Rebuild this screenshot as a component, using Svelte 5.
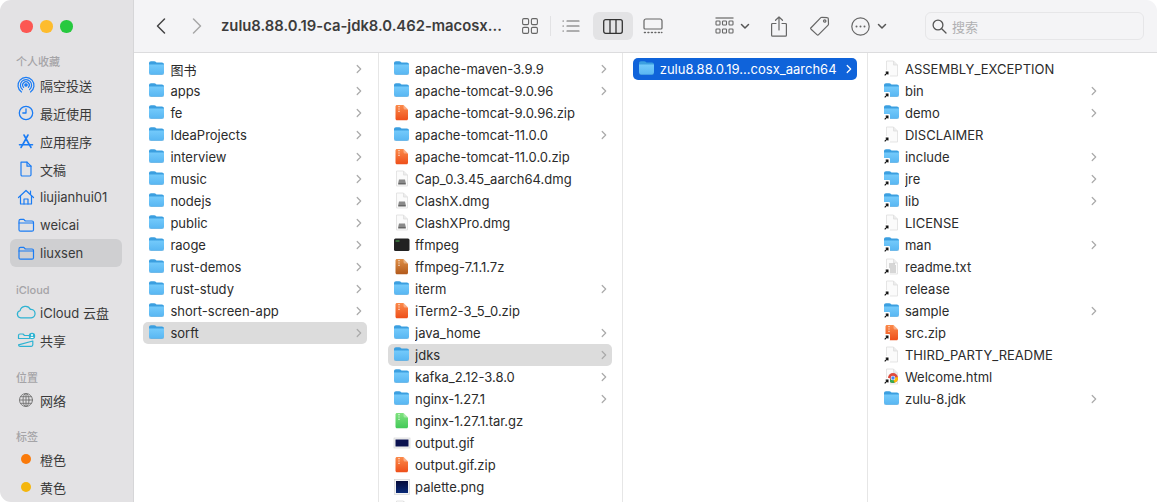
<script>
  const side = [
    { h: '个人收藏', cls: 'first', items: [['隔空投送','airdrop'],['最近使用','clock'],['应用程序','apps'],['文稿','doc'],['liujianhui01','home'],['weicai','folder'],['liuxsen','folder',true]] },
    { h: 'iCloud', cls: 'sec-a', items: [['iCloud 云盘','cloud'],['共享','shared']] },
    { h: '位置', cls: 'sec-b', items: [['网络','globe']] },
    { h: '标签', cls: 'sec-c', items: [['橙色','orange'],['黄色','yellow']] }
  ];
  const f = 'folder', z = 'zip';
  const col1 = [['图书',f],['apps',f],['fe',f],['IdeaProjects',f],['interview',f],['music',f],['nodejs',f],['public',f],['raoge',f],['rust-demos',f],['rust-study',f],['short-screen-app',f],['sorft',f,'grey']];
  const col2 = [['apache-maven-3.9.9',f],['apache-tomcat-9.0.96',f],['apache-tomcat-9.0.96.zip',z],['apache-tomcat-11.0.0',f],['apache-tomcat-11.0.0.zip',z],['Cap_0.3.45_aarch64.dmg','dmg'],['ClashX.dmg','dmg'],['ClashXPro.dmg','dmg'],['ffmpeg','term'],['ffmpeg-7.1.1.7z','7z'],['iterm',f],['iTerm2-3_5_0.zip',z],['java_home',f],['jdks',f,'grey'],['kafka_2.12-3.8.0',f],['nginx-1.27.1',f],['nginx-1.27.1.tar.gz','gz'],['output.gif','gif'],['output.gif.zip',z],['palette.png','png'],['','dmg']];
  const col3 = [['zulu8.88.0.19...cosx_aarch64',f,'blue']];
  const col4 = [['ASSEMBLY_EXCEPTION','adoc'],['bin','afolder'],['demo','afolder'],['DISCLAIMER','adoc'],['include','afolder'],['jre','afolder'],['lib','afolder'],['LICENSE','adoc'],['man','afolder'],['readme.txt','atxt'],['release','adoc'],['sample','afolder'],['src.zip','azip'],['THIRD_PARTY_README','adoc'],['Welcome.html','ahtml'],['zulu-8.jdk','f8']];
  const cols = [col1, col2, col3, col4];
  const hasChevron = (k) => k === 'folder' || k === 'afolder' || k === 'f8';
</script>

{#snippet folderShape()}
  <path d="M1 3.2C1 2 1.8 1.2 3 1.2h3.2c.7 0 1.100.2 1.500.6l.8.8h5.400c1.200 0 2.100.9 2.100 2.100v1H1z" fill="#3b9fe0"/>
  <path d="M1 4.600h15v8c0 1.200-.9 2.100-2.100 2.100H3.100C1.900 14.700 1 13.800 1 12.600z" fill="url(#fg)"/>
  <path d="M1 12.600c0 1.200.9 2.100 2.100 2.100h10.800c1.200 0 2.100-.9 2.100-2.100v.5c0 1.200-.9 2-2.100 2H3.100c-1.200 0-2.100-.8-2.100-2z" fill="#3c8fc8"/>
{/snippet}
{#snippet alias()}
  <rect x="0" y="10" width="7" height="7" rx="1" fill="#fff"/>
  <path d="M1.700 15.300l3-3M2.700 12.200h2.200v2.200" stroke="#111" stroke-width="1.200" fill="none"/>
{/snippet}
{#snippet blank()}
  <path d="M3.500 1h7l4 4v11h-11z" fill="#fbfbfb" stroke="#dedede" stroke-width=".8"/>
  <path d="M10.500 1v4h4" fill="#ececec" stroke="#dedede" stroke-width=".8"/>
{/snippet}
{#snippet zipShape(id)}
  <path d="M4 1h6.500l4.500 4.500v9.200c0 .9-.6 1.500-1.500 1.500h-9.500c-.9 0-1.500-.6-1.500-1.500V2.500C2.500 1.600 3.100 1 4 1z" fill="url(#{id})"/>
  <path d="M10.500 1v3c0 .9.600 1.500 1.500 1.500h3z" fill="#fff" opacity=".35"/>
  <path d="M6 2v6" stroke="#fff" stroke-width="1.200" stroke-dasharray="1.200 1.200" opacity=".85"/>
{/snippet}

{#snippet fileIcon(k)}
  <svg class="ficon" width="18" height="18" viewBox="0 0 18 18" aria-hidden="true">
    {#if k === 'folder'}
      {@render folderShape()}
    {:else if k === 'afolder' || k === 'f8'}
      {@render folderShape()}
      {#if k === 'afolder'}{@render alias()}{/if}
    {:else if k === 'zip'}
      {@render zipShape('zg')}
    {:else if k === '7z'}
      {@render zipShape('sg')}
    {:else if k === 'gz'}
      {@render zipShape('gg')}
    {:else if k === 'azip'}
      {@render zipShape('zg')}{@render alias()}
    {:else if k === 'dmg'}
      {@render blank()}
      <path d="M6 9.500h6l.8 3.500H5.200z" fill="#8a8a8a"/><rect x="5.200" y="13" width="7.600" height="1.500" fill="#666"/>
    {:else if k === 'term'}
      <rect x="1" y="2.500" width="15.500" height="12.500" rx="1.500" fill="#222"/>
      <path d="M2.500 5h4" stroke="#4caf50" stroke-width="1"/>
    {:else if k === 'gif'}
      <rect x="1" y="4" width="16" height="10" fill="#f4f4f4" stroke="#cfcfcf" stroke-width=".6"/>
      <rect x="2.500" y="5.500" width="13" height="7" fill="#0b1250"/>
    {:else if k === 'png'}
      <rect x="1.500" y="1.500" width="15" height="15" fill="#f4f4f4" stroke="#cfcfcf" stroke-width=".6"/>
      <rect x="3" y="3" width="12" height="12" fill="url(#pg)"/>
    {:else if k === 'adoc'}
      {@render blank()}{@render alias()}
    {:else if k === 'atxt'}
      {@render blank()}
      <path d="M6 6h6M6 8h7M6 10h7M7 12h6M7 14h6" stroke="#a8a8a8" stroke-width=".9"/>
      {@render alias()}
    {:else if k === 'ahtml'}
      {@render blank()}
      <circle cx="10" cy="10" r="5" fill="#dd4b3e"/>
      <path d="M10 10L5.700 12.600A5 5 0 0 0 11.700 14.700z" fill="#34a853"/>
      <path d="M10 10l1.700 4.700A5 5 0 0 0 14.900 9z" fill="#fbbc05"/>
      <circle cx="10" cy="10" r="2.300" fill="#fff"/><circle cx="10" cy="10" r="1.700" fill="#4285f4"/>
      {@render alias()}
    {/if}
  </svg>
{/snippet}

{#snippet sideIcon(k)}
  <svg class="sicon" width="20" height="20" viewBox="0 0 20 20" fill="none" stroke="#1b7cf4" stroke-width="1.200" stroke-linecap="round" stroke-linejoin="round" aria-hidden="true">
    {#if k === 'airdrop'}
      <path d="M5.500 17A8 8 0 1 1 14.500 17" /><path d="M6.500 14.600A5.600 5.600 0 1 1 13.500 14.600"/><path d="M7.600 12.400A3.300 3.300 0 1 1 12.400 12.400"/><circle cx="10" cy="10" r="1.200" fill="#1b7cf4"/>
    {:else if k === 'clock'}
      <circle cx="10" cy="10" r="6.700" stroke-width="1.300"/><path d="M10 5.800V10H6.800" stroke-width="1.300"/>
    {:else if k === 'apps'}
      <path d="M8 4l5.500 10M12 4L6.500 14M3.500 13.800h13" stroke-width="1.600"/><path d="M5 16.500l1.500-2.700M15 16.500l-1.500-2.700" stroke-width="1.600"/>
    {:else if k === 'doc'}
      <path d="M5 3.200h6l4 4v8.600c0 .7-.5 1.200-1.200 1.200H6.200C5.500 17 5 16.500 5 15.800z"/><path d="M11 3.200v4h4"/>
    {:else if k === 'home'}
      <path d="M2.500 10.500L10 3.500l7.500 7"/><path d="M4.500 9v8h11V9"/><path d="M8 17v-5h4v5"/><path d="M14.500 4v3"/>
    {:else if k === 'folder'}
      <path d="M3 6c0-1 .6-1.600 1.500-1.600h3.300l1.500 1.600h6.700c1 0 1.500.6 1.500 1.500v7.200c0 1-.6 1.500-1.500 1.500H4.500C3.600 16.200 3 15.700 3 14.700z"/><path d="M3 8h14"/>
    {:else if k === 'cloud'}
      <path stroke="#2eb3d2" d="M5 15.500a3.400 3.400 0 0 1-.6-6.700A5.200 5.200 0 0 1 14.200 7.500a4 4 0 0 1 .8 8z" transform="translate(-.5 -.5) scale(1.050)"/>
    {:else if k === 'shared'}
      <path stroke="#2eb3d2" d="M2.500 5.500c0-1 .6-1.500 1.500-1.500h3l1.500 1.500h4.500M16.800 11v3.800c0 1-.6 1.500-1.500 1.500H4c-.9 0-1.500-.5-1.500-1.500zM2.500 5.500v3h11"/>
      <circle cx="16" cy="6" r="3.200" fill="#2eb3d2" stroke="none"/><circle cx="16" cy="5" r="1" fill="#fff" stroke="none"/><path d="M14.300 8a1.800 1.800 0 0 1 3.400 0z" fill="#fff" stroke="none"/>
    {:else if k === 'globe'}
      <g stroke="#7a7a7a" stroke-width="1"><circle cx="10" cy="10" r="6.500"/><ellipse cx="10" cy="10" rx="3" ry="6.500"/><path d="M3.500 10h13M4.500 6.700h11M4.500 13.300h11M10 3.500v13"/></g>
    {:else if k === 'orange'}
      <circle cx="10" cy="10" r="5" fill="#fa7a0a" stroke="none"/>
    {:else if k === 'yellow'}
      <circle cx="10" cy="10" r="5" fill="#f4b60d" stroke="none"/>
    {/if}
  </svg>
{/snippet}

{#snippet chevDown()}
  <svg width="10" height="7" viewBox="0 0 10 7" fill="none" stroke="#555" stroke-width="1.500" stroke-linecap="round" stroke-linejoin="round" aria-hidden="true"><path d="M1.500 1.500L5 5l3.500-3.500"/></svg>
{/snippet}

<svg class="defs" width="0" height="0" aria-hidden="true">
  <defs>
    <linearGradient id="fg" x1="0" y1="0" x2="0" y2="1"><stop offset="0" stop-color="#74cafb"/><stop offset="1" stop-color="#58b6f2"/></linearGradient>
    <linearGradient id="zg" x1="0" y1="0" x2="0" y2="1"><stop offset="0" stop-color="#fb8a4a"/><stop offset="1" stop-color="#ee4f1a"/></linearGradient>
    <linearGradient id="sg" x1="0" y1="0" x2="0" y2="1"><stop offset="0" stop-color="#e09048"/><stop offset="1" stop-color="#b25a1c"/></linearGradient>
    <linearGradient id="gg" x1="0" y1="0" x2="0" y2="1"><stop offset="0" stop-color="#7fe27e"/><stop offset="1" stop-color="#43c958"/></linearGradient>
    <linearGradient id="pg" x1="0" y1="0" x2="0" y2="1"><stop offset="0" stop-color="#050a3a"/><stop offset="1" stop-color="#0a2a78"/></linearGradient>
  </defs>
</svg>

<div class="window">
  <aside class="sidebar">
    <div class="lights"><span class="l r"></span><span class="l y"></span><span class="l g"></span></div>
    {#each side as s}
      <div class="shead {s.cls}">{s.h}</div>
      {#each s.items as it}
        <div class="sitem" class:sel={it[2]}>
          {@render sideIcon(it[1])}
          <span>{it[0]}</span>
        </div>
      {/each}
    {/each}
  </aside>
  <main class="main">
    <header class="toolbar">
      <button class="nav first-nav" aria-label="后退">
        <svg width="12" height="18" viewBox="0 0 12 18" fill="none" stroke="#444" stroke-width="1.500" stroke-linecap="round" stroke-linejoin="round"><path d="M9.500 2L2.500 9l7 7"/></svg>
      </button>
      <button class="nav next-nav" aria-label="前进">
        <svg width="12" height="18" viewBox="0 0 12 18" fill="none" stroke="#a8a8a8" stroke-width="1.500" stroke-linecap="round" stroke-linejoin="round"><path d="M2.500 2l7 7-7 7"/></svg>
      </button>
      <div class="title">zulu8.88.0.19-ca-jdk8.0.462-macosx...</div>
      <div class="views">
        <button class="seg" aria-label="图标">
          <svg width="16" height="16" viewBox="0 0 16 16" fill="none" stroke="#666" stroke-width="1.100"><rect x=".6" y=".6" width="6" height="6" rx="1.300"/><rect x="9.400" y=".6" width="6" height="6" rx="1.300"/><rect x=".6" y="9.400" width="6" height="6" rx="1.300"/><rect x="9.400" y="9.400" width="6" height="6" rx="1.300"/></svg>
        </button>
        <span class="vsep"></span>
        <button class="seg" aria-label="列表">
          <svg width="18" height="14" viewBox="0 0 18 14" fill="none" stroke="#666" stroke-width="1.200" stroke-linecap="round"><path d="M5 2h12M5 7h12M5 12h12M1 2h.4M1 7h.4M1 12h.4"/></svg>
        </button>
        <button class="seg on" aria-label="分栏">
          <svg width="20" height="15" viewBox="0 0 20 15" fill="none" stroke="#333" stroke-width="1.300"><rect x=".7" y=".7" width="18.600" height="13.600" rx="2"/><path d="M7 .7v13.600M13 .7v13.600"/></svg>
        </button>
        <button class="seg" aria-label="画廊">
          <svg width="20" height="16" viewBox="0 0 20 16" fill="none" stroke="#666" stroke-width="1.200" stroke-linecap="round"><path d="M1 10V3c0-1.200.8-2 2-2h14c1.200 0 2 .8 2 2v7c0 .6-.4 1-1 1H2c-.6 0-1-.4-1-1z"/><path d="M1.500 14.500h.8M5 14.500h.8M8.500 14.500h.8M12 14.500h.8M15.500 14.500h.8M18.500 14.500h.3" stroke-width="1.600"/></svg>
        </button>
      </div>
      <button class="tool group" aria-label="分组">
        <svg width="19" height="18" viewBox="0 0 19 18" fill="none" stroke="#666" stroke-width="1.100"><path d="M.5 1h18" stroke-width="1.200"/><rect x="1" y="4" width="4" height="4" rx=".8"/><rect x="7.500" y="4" width="4" height="4" rx=".8"/><rect x="14" y="4" width="4" height="4" rx=".8"/><rect x="1" y="12" width="4" height="4" rx=".8"/><rect x="7.500" y="12" width="4" height="4" rx=".8"/><rect x="14" y="12" width="4" height="4" rx=".8"/></svg>
        {@render chevDown()}
      </button>
      <button class="tool share" aria-label="共享">
        <svg width="16" height="21" viewBox="0 0 16 21" fill="none" stroke="#666" stroke-width="1.200" stroke-linecap="round" stroke-linejoin="round"><path d="M5 7.500H1.600c-.6 0-1 .4-1 1v10.700c0 .6.400 1 1 1h12.800c.6 0 1-.4 1-1V8.500c0-.6-.4-1-1-1H11"/><path d="M8 14V1M4.500 4.300L8 1l3.500 3.300"/></svg>
      </button>
      <button class="tool tag" aria-label="标签">
        <svg width="20" height="20" viewBox="0 0 20 20" fill="none" stroke="#666" stroke-width="1.200" stroke-linejoin="round"><path d="M1.300 11.500L10.800 1.700c.3-.3.600-.4 1-.4l5.300.3c.7 0 1.200.5 1.200 1.200l.2 5.300c0 .4-.1.700-.4 1l-9.500 9.500c-.5.500-1.200.5-1.700 0l-5.800-5.400c-.5-.5-.5-1.200 0-1.700z"/><circle cx="14.700" cy="5" r="1.200"/></svg>
      </button>
      <button class="tool more" aria-label="更多">
        <svg width="19" height="19" viewBox="0 0 19 19" fill="none" stroke="#666" stroke-width="1.200"><circle cx="9.500" cy="9.500" r="8.700"/><circle cx="5.500" cy="9.500" r="1" fill="#666" stroke="none"/><circle cx="9.500" cy="9.500" r="1" fill="#666" stroke="none"/><circle cx="13.500" cy="9.500" r="1" fill="#666" stroke="none"/></svg>
        {@render chevDown()}
      </button>
      <div class="search">
        <svg width="15" height="15" viewBox="0 0 15 15" fill="none" stroke="#555" stroke-width="1.300" stroke-linecap="round"><circle cx="6" cy="6" r="4.900"/><path d="M9.700 9.700l4.300 4.300"/></svg>
        <span>搜索</span>
      </div>
    </header>
    <section class="columns">
      {#each cols as col}
        <div class="col">
          {#each col as row}
            <div class="row {row[2] ?? ''}">
              {@render fileIcon(row[1])}
              <span class="name">{row[0]}</span>
              {#if hasChevron(row[1])}
                <svg class="chev" width="6" height="10" viewBox="0 0 6 10" fill="none" stroke-width="1.200" stroke-linecap="round" stroke-linejoin="round" aria-hidden="true"><path d="M1.200 1.500L4.700 5 1.200 8.500"/></svg>
              {/if}
            </div>
          {/each}
        </div>
      {/each}
    </section>
  </main>
</div>

<style>
  :global(body) { margin: 0; background: #fff; }
  .defs { position: absolute; }
  .window {
    width: 1157px; height: 502px; display: flex; overflow: hidden;
    border-radius: 11px; background: #fff;
    font-family: Inter, "Noto Sans CJK SC", sans-serif; font-size: 13px; color: #2b2b2b;
  }
  .sidebar { width: 133px; flex: none; background: #e3e2e4; padding: 20px 11px 0 10px; box-sizing: border-box; overflow: hidden; }
  .lights { display: flex; gap: 7.500px; padding-left: 10px; height: 13px; }
  .l { width: 12.500px; height: 12.500px; border-radius: 50%; }
  .r { background: #fc5753; } .y { background: #fdbc2e; } .g { background: #27c93f; }
  .shead { font-size: 11px; font-weight: 500; color: #a5a4a7; height: 15px; line-height: 15px; padding-left: 6px; }
  .shead.first { margin-top: 22px; margin-bottom: 1px; }
  .shead.sec-a { margin-top: 16px; }
  .shead.sec-b { margin-top: 17px; }
  .shead.sec-c { margin-top: 16px; }
  .sitem { height: 28px; display: flex; align-items: center; border-radius: 6px; padding-left: 6px; gap: 4px; color: #3a3a3a; white-space: nowrap; }
  .sitem.sel { background: #cfcfd1; }
  .sicon { flex: none; }
  .main { flex: 1; min-width: 0; display: flex; flex-direction: column; border-left: 1px solid #d6d6d8; }
  .toolbar { height: 53px; flex: none; box-sizing: border-box; background: #f4f4f6; border-bottom: 1px solid #dcdcde; display: flex; align-items: center; padding-left: 17px; }
  button { border: 0; background: none; padding: 0; display: flex; align-items: center; justify-content: center; }
  .nav { width: 20px; height: 28px; }
  .next-nav { margin-left: 16px; }
  .title { margin-left: 14px; width: 280px; font-size: 14.800px; font-weight: 600; color: #3c3c3c; white-space: nowrap; overflow: hidden; }
  .views { margin-left: 9px; display: flex; align-items: center; }
  .seg { width: 40px; height: 28px; border-radius: 6px; }
  .seg.on { background: #e3e3e5; margin-left: 2px; }
  .vsep { width: 1px; height: 20px; background: #e2e2e4; }
  .tool { height: 28px; gap: 6px; }
  .group { margin-left: 42px; }
  .share { margin-left: 21px; }
  .tag { margin-left: 23px; }
  .more { margin-left: 21px; gap: 7px; }
  .search { margin-left: 38px; width: 219px; height: 28px; box-sizing: border-box; border: 1px solid #e6e6e8; border-radius: 6px; display: flex; align-items: center; gap: 5px; padding-left: 6px; color: #b0b0b2; font-size: 13px; }
  .columns { flex: 1; min-height: 0; display: flex; overflow: hidden; padding: 0; }
  .col { width: 244.670px; flex: none; box-sizing: border-box; border-right: 1px solid #e6e6e6; padding: 5px 10px 0 9.400px; overflow: hidden; }
  .col:last-child { border-right: 0; padding-left: 10px; }
  .row { height: 22px; display: flex; align-items: center; border-radius: 5px; padding-left: 5px; box-sizing: border-box; width: 224px; }
  .ficon { flex: none; width: 18px; height: 18px; }
  .name { margin-left: 4px; flex: 1; white-space: nowrap; overflow: hidden; }
  .chev { flex: none; margin-right: 5px; stroke: #aaa; }
  .row.grey { background: #dcdcdc; }
  .row.blue { background: #0f63da; color: #fff; }
  .row.blue .chev { stroke: #fff; }
</style>
